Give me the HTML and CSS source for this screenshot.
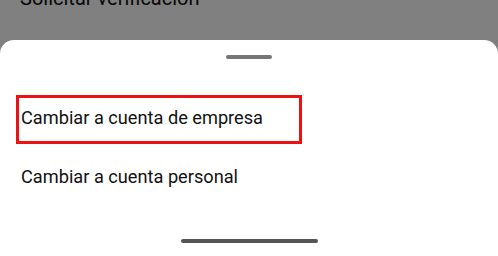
FILE: index.html
```html
<!DOCTYPE html>
<html lang="es">
<head>
<meta charset="utf-8">
<link rel="stylesheet" href="styles.css">
</head>
<body>
<div class="backdrop">
  <div class="behind-item">Solicitar verificación</div>
</div>
<div class="sheet">
  <div class="handle"></div>
  <div class="options">
    <div class="option highlighted">Cambiar a cuenta de empresa</div>
    <div class="option">Cambiar a cuenta personal</div>
  </div>
  <div class="home-bar"></div>
</div>
</body>
</html>
```
FILE: styles.css
```css
html, body {
  margin: 0;
  padding: 0;
  width: 498px;
  height: 256px;
  overflow: hidden;
  background: #808080;
  font-family: Roboto, "Noto Sans", sans-serif;
}
.backdrop {
  height: 40px;
  position: relative;
  overflow: hidden;
}
.behind-item {
  position: absolute;
  left: 20px;
  top: -14px;
  font-size: 20px;
  line-height: 24px;
  color: #080808;
}
.sheet {
  background: #fff;
  height: 216px;
  border-radius: 14px 14px 0 0;
  display: flex;
  flex-direction: column;
}
.handle {
  width: 46px;
  height: 4px;
  border-radius: 2px;
  background: #767676;
  margin: 15px auto 0;
}
.options {
  display: flex;
  flex-direction: column;
  margin-top: 36px;
}
.option {
  font-size: 18.2px;
  line-height: 21px;
  color: #111;
  padding: 9px 0 0 21px;
  box-sizing: border-box;
  height: 49px;
}
.option + .option {
  margin-top: 13px;
}
.highlighted {
  width: 286px;
  margin-left: 16px;
  padding-left: 2px;
  border: 3px solid #ee1111;
}
.home-bar {
  width: 137px;
  height: 4px;
  border-radius: 2px;
  background: #555;
  margin: auto auto 13px;
}
```
